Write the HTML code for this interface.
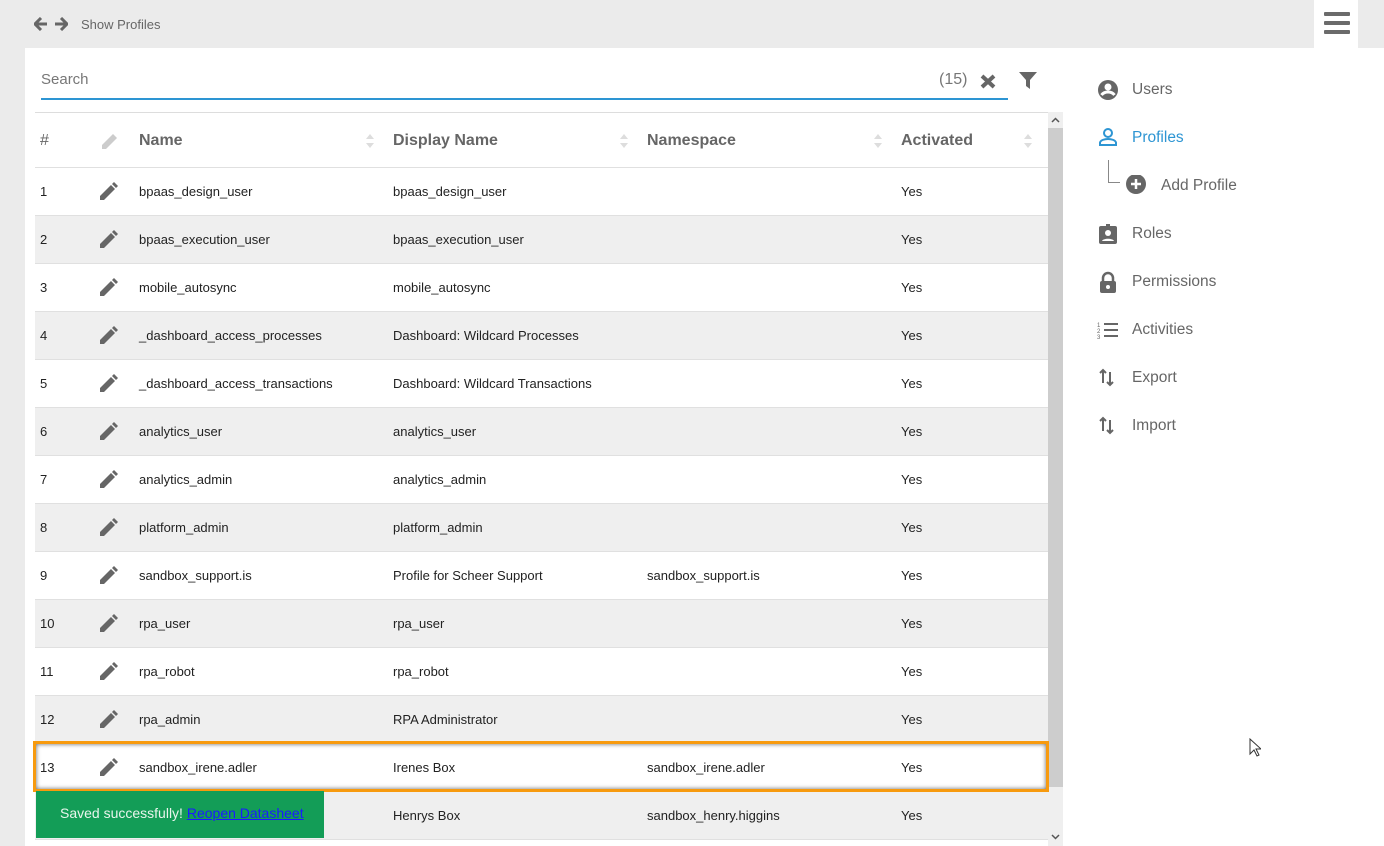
<!DOCTYPE html>
<html><head><meta charset="utf-8"><style>
*{box-sizing:border-box;margin:0;padding:0}
body{width:1384px;height:846px;overflow:hidden;background:#fff;font-family:"Liberation Sans",Roboto,sans-serif;position:relative;color:#222}
.top{position:absolute;left:0;top:0;width:1384px;height:48px;background:#ebebeb}
.leftstrip{position:absolute;left:0;top:48px;width:25px;height:798px;background:#ebebeb}
.ham{position:absolute;left:1314px;top:0;width:44px;height:48px;background:#fff}
.ham i{position:absolute;left:10px;width:26px;height:4px;background:#6b6b6b;border-radius:1px}
.crumb{position:absolute;left:81px;top:17px;font-size:13px;color:#666}
.search{position:absolute;left:41px;top:71px;font-size:15px;color:#777}
.sline{position:absolute;left:41px;top:98px;width:967px;height:2px;background:#2d95d3}
.cnt{position:absolute;left:939px;top:71px;font-size:16px;color:#777}
.tbl{position:absolute;left:35px;top:112px;width:1013px;border-top:1px solid #ddd}
.row{position:relative;height:48px;border-bottom:1px solid #e0e0e0;font-size:13px}
.row.g{background:#efefef}
.row span{position:absolute;top:16px}
.hdr{height:55px;font-size:16px;color:#666;font-weight:bold}
.hdr span{top:19px}
.sb{position:absolute;left:1048px;top:112px;width:15px;height:734px;background:#efefef}
.thumb{position:absolute;left:1048px;top:128px;width:15px;height:659px;background:#cdcdcd}
.hl{position:absolute;left:33px;top:741px;width:1016px;height:51px;border:3px solid #f79a0e;box-shadow:inset 0 0 5px rgba(0,0,0,.6)}
.toast{position:absolute;left:36px;top:791px;width:288px;height:47px;background:#139d57;color:#e8f5ec;font-size:14px;padding:14px 0 0 24px}
.toast a{color:#1a1aff;text-decoration:underline}
.nav{position:absolute;left:1097px;font-size:15.5px;color:#666}
.nav span{position:absolute;left:35px;top:1px;white-space:nowrap}
.nav svg{position:absolute;left:0;top:-1px}
</style></head><body>
<div class="top"></div><div class="leftstrip"></div>
<div class="ham"><i style="top:12px"></i><i style="top:21px"></i><i style="top:30px"></i></div>
<svg style="position:absolute;left:34px;top:17px" width="34" height="14" viewBox="0 0 34 14"><path d="M7 1L1 7l6 6M1 7h12" stroke="#666" stroke-width="3" fill="none"/><path d="M27 1l6 6-6 6M33 7H21" stroke="#666" stroke-width="3" fill="none"/></svg>
<div class="crumb">Show Profiles</div>
<div class="search">Search</div><div class="sline"></div>
<div class="cnt">(15)</div>
<svg style="position:absolute;left:980px;top:74px" width="16" height="15"><path d="M2 2l12 11M14 2L2 13" stroke="#666" stroke-width="4"/></svg>
<svg style="position:absolute;left:1018px;top:71px" width="20" height="20"><path d="M1 1h18l-7 8v9l-4-3V9z" fill="#666"/></svg>
<div class="sb"></div><div class="thumb"></div>
<svg style="position:absolute;left:1051px;top:117px" width="9" height="6"><path d="M1 5l3.5-3.5L8 5" stroke="#555" stroke-width="1.5" fill="none"/></svg>
<svg style="position:absolute;left:1051px;top:834px" width="9" height="6"><path d="M1 1l3.5 3.5L8 1" stroke="#555" stroke-width="1.5" fill="none"/></svg>
<div class="tbl">
<div class="row hdr"><span style="left:5px;font-weight:normal">#</span>
<svg style="position:absolute;left:65px;top:18px" width="20" height="20"><path d="M2 18v-4L13 3l4 4L6 18z" fill="#ccc"/></svg>
<span style="left:104px">Name</span><span style="left:358px">Display Name</span><span style="left:612px">Namespace</span><span style="left:866px">Activated</span>
<svg style="position:absolute;left:330px;top:20px" width="10" height="16"><path d="M1 6l4-5 4 5zM1 10l4 5 4-5z" fill="#ddd"/></svg>
<svg style="position:absolute;left:584px;top:20px" width="10" height="16"><path d="M1 6l4-5 4 5zM1 10l4 5 4-5z" fill="#ddd"/></svg>
<svg style="position:absolute;left:838px;top:20px" width="10" height="16"><path d="M1 6l4-5 4 5zM1 10l4 5 4-5z" fill="#ddd"/></svg>
<svg style="position:absolute;left:988px;top:20px" width="10" height="16"><path d="M1 6l4-5 4 5zM1 10l4 5 4-5z" fill="#ddd"/></svg>
</div>
<div class="row"><span style="left:5px">1</span><span style="left:104px">bpaas_design_user</span><span style="left:358px">bpaas_design_user</span><span style="left:866px">Yes</span></div>
<div class="row g"><span style="left:5px">2</span><span style="left:104px">bpaas_execution_user</span><span style="left:358px">bpaas_execution_user</span><span style="left:866px">Yes</span></div>
<div class="row"><span style="left:5px">3</span><span style="left:104px">mobile_autosync</span><span style="left:358px">mobile_autosync</span><span style="left:866px">Yes</span></div>
<div class="row g"><span style="left:5px">4</span><span style="left:104px">_dashboard_access_processes</span><span style="left:358px">Dashboard: Wildcard Processes</span><span style="left:866px">Yes</span></div>
<div class="row"><span style="left:5px">5</span><span style="left:104px">_dashboard_access_transactions</span><span style="left:358px">Dashboard: Wildcard Transactions</span><span style="left:866px">Yes</span></div>
<div class="row g"><span style="left:5px">6</span><span style="left:104px">analytics_user</span><span style="left:358px">analytics_user</span><span style="left:866px">Yes</span></div>
<div class="row"><span style="left:5px">7</span><span style="left:104px">analytics_admin</span><span style="left:358px">analytics_admin</span><span style="left:866px">Yes</span></div>
<div class="row g"><span style="left:5px">8</span><span style="left:104px">platform_admin</span><span style="left:358px">platform_admin</span><span style="left:866px">Yes</span></div>
<div class="row"><span style="left:5px">9</span><span style="left:104px">sandbox_support.is</span><span style="left:358px">Profile for Scheer Support</span><span style="left:612px">sandbox_support.is</span><span style="left:866px">Yes</span></div>
<div class="row g"><span style="left:5px">10</span><span style="left:104px">rpa_user</span><span style="left:358px">rpa_user</span><span style="left:866px">Yes</span></div>
<div class="row"><span style="left:5px">11</span><span style="left:104px">rpa_robot</span><span style="left:358px">rpa_robot</span><span style="left:866px">Yes</span></div>
<div class="row g"><span style="left:5px">12</span><span style="left:104px">rpa_admin</span><span style="left:358px">RPA Administrator</span><span style="left:866px">Yes</span></div>
<div class="row"><span style="left:5px">13</span><span style="left:104px">sandbox_irene.adler</span><span style="left:358px">Irenes Box</span><span style="left:612px">sandbox_irene.adler</span><span style="left:866px">Yes</span></div>
<div class="row g"><span style="left:5px">14</span><span style="left:104px">sandbox_henry.higgins</span><span style="left:358px">Henrys Box</span><span style="left:612px">sandbox_henry.higgins</span><span style="left:866px">Yes</span></div>
</div>
<svg style="position:absolute;left:0;top:0;pointer-events:none" width="1384" height="846">
<defs><path id="p" d="M0 18v-4L11 3l4 4L4 18z M12 2l2-2 4 4-2 2z" fill="#666"/></defs>
<use href="#p" x="100" y="182"/><use href="#p" x="100" y="230"/><use href="#p" x="100" y="278"/><use href="#p" x="100" y="326"/><use href="#p" x="100" y="374"/><use href="#p" x="100" y="422"/><use href="#p" x="100" y="470"/><use href="#p" x="100" y="518"/><use href="#p" x="100" y="566"/><use href="#p" x="100" y="614"/><use href="#p" x="100" y="662"/><use href="#p" x="100" y="710"/><use href="#p" x="100" y="758"/>
</svg>
<div class="hl"></div>
<div class="toast">Saved successfully! <a>Reopen Datasheet</a></div>
<div class="nav" style="top:80px"><svg width="22" height="22"><circle cx="11" cy="11" r="10" fill="#666"/><circle cx="11" cy="8" r="3.5" fill="#fff"/><path d="M4.5 16c3-4 10-4 13 0" stroke="#fff" stroke-width="3" fill="none"/></svg><span>Users</span></div>
<div class="nav" style="top:128px;color:#2d95d3"><svg width="22" height="22"><circle cx="11" cy="6" r="4" stroke="#2d95d3" stroke-width="2" fill="none"/><path d="M3 18v-2c0-3 5-4 8-4s8 1 8 4v2z" stroke="#2d95d3" stroke-width="2" fill="none"/></svg><span>Profiles</span></div>
<div style="position:absolute;left:1108px;top:160px;width:12px;height:23px;border-left:1px solid #888;border-bottom:1px solid #888"></div>
<div class="nav" style="top:176px;left:1126px"><svg width="22" height="22"><circle cx="10" cy="9" r="10" fill="#666"/><path d="M10 4v10M5 9h10" stroke="#fff" stroke-width="2.5"/></svg><span>Add Profile</span></div>
<div class="nav" style="top:224px"><svg width="22" height="22"><rect x="2" y="3" width="18" height="18" rx="2" fill="#666"/><circle cx="11" cy="10" r="3" fill="#fff"/><path d="M5 18c1-3 11-3 12 0z" fill="#fff"/><rect x="9" y="1" width="4" height="4" fill="#666"/></svg><span>Roles</span></div>
<div class="nav" style="top:272px"><svg width="22" height="22"><path d="M6 10V7a5 5 0 0110 0v3" stroke="#666" stroke-width="2.5" fill="none"/><rect x="3" y="10" width="16" height="12" rx="2" fill="#666"/><circle cx="11" cy="16" r="2" fill="#fff"/></svg><span>Permissions</span></div>
<div class="nav" style="top:320px"><svg width="22" height="22"><path d="M7 5h14M7 11h14M7 17h14" stroke="#666" stroke-width="2"/><text x="0" y="8" font-size="6" fill="#666">1</text><text x="0" y="14" font-size="6" fill="#666">2</text><text x="0" y="20" font-size="6" fill="#666">3</text></svg><span>Activities</span></div>
<div class="nav" style="top:368px"><svg width="22" height="22"><path d="M6 16V3M3 6l3-3 3 3M13 5v13M10 15l3 3 3-3" stroke="#666" stroke-width="2" fill="none"/></svg><span>Export</span></div>
<div class="nav" style="top:416px"><svg width="22" height="22"><path d="M6 16V3M3 6l3-3 3 3M13 5v13M10 15l3 3 3-3" stroke="#666" stroke-width="2" fill="none"/></svg><span>Import</span></div>
<svg style="position:absolute;left:1249px;top:738px" width="12" height="19"><path d="M1 1v15l4-4 3 6 2-1-3-6h5z" fill="#fff" stroke="#333"/></svg>
</body></html>
